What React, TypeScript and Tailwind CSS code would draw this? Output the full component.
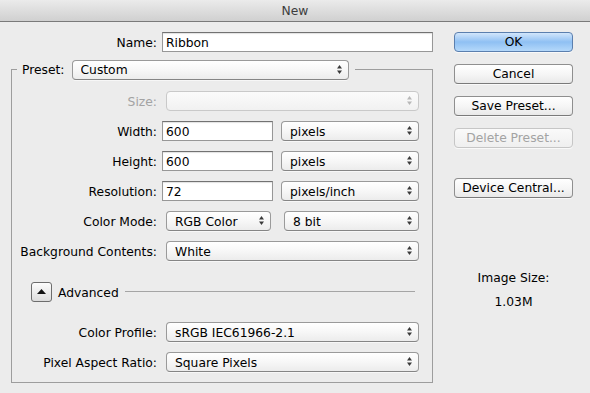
import React from 'react'

const font = { fontFamily: '"DejaVu Sans", "Liberation Sans", sans-serif' }

function Arrows({ disabled }: { disabled?: boolean }) {
  return (
    <svg width="5" height="9" viewBox="0 0 5 9" className="shrink-0">
      <polygon points="2.5,0 5,3.5 0,3.5" fill={disabled ? '#b8b8b8' : '#3a3a3a'} />
      <polygon points="0,5.5 5,5.5 2.5,9" fill={disabled ? '#b8b8b8' : '#3a3a3a'} />
    </svg>
  )
}

function Popup({ value, width, disabled, className = '' }: { value?: string; width: string; disabled?: boolean; className?: string }) {
  return (
    <div
      className={`flex h-[20px] items-center justify-between rounded-[4px] border pl-[8px] pr-[6px] text-[12.3px] ${width} ${className} ${
        disabled
          ? 'border-[#c9c9c9] bg-gradient-to-b from-[#fbfbfb] to-[#f1f1f1] text-[#a0a0a0]'
          : 'border-[#9a9a9a] border-b-[#858585] bg-gradient-to-b from-[#ffffff] via-[#f7f7f7] to-[#ececec] text-black shadow-[0_1px_0_rgba(255,255,255,0.6)]'
      }`}
    >
      <span className="truncate pt-[2px]">{value}</span>
      <Arrows disabled={disabled} />
    </div>
  )
}

function TextInput({ value, width }: { value: string; width: string }) {
  return (
    <div
      className={`flex h-[20px] items-center border border-[#979797] border-t-[#727272] bg-white pt-[2px] pl-[3px] text-[12.3px] text-black shadow-[inset_0_1px_1px_rgba(0,0,0,0.12)] ${width}`}
    >
      {value}
    </div>
  )
}

function Label({ children, disabled }: { children: React.ReactNode; disabled?: boolean }) {
  return (
    <span className={`w-[145px] shrink-0 pt-[2px] text-right text-[12.3px] ${disabled ? 'text-[#a3a3a3]' : 'text-black'}`}>{children}</span>
  )
}

function Button({ children, primary, disabled, className = '' }: { children: React.ReactNode; primary?: boolean; disabled?: boolean; className?: string }) {
  const look = primary
    ? 'border-[#5b7fae] bg-gradient-to-b from-[#d2e6fb] via-[#8fc0f3] to-[#b4d8fa] text-black'
    : disabled
      ? 'border-[#c6c6c6] bg-gradient-to-b from-[#fafafa] to-[#efefef] text-[#a3a3a3]'
      : 'border-[#8f8f8f] border-b-[#7a7a7a] bg-gradient-to-b from-[#ffffff] via-[#f6f6f6] to-[#e9e9e9] text-black'
  return (
    <div className={`flex h-[20px] w-[119px] items-center justify-center rounded-[4px] border pt-[1px] text-[12.3px] shadow-[0_1px_0_rgba(255,255,255,0.7)] ${look} ${className}`}>
      {children}
    </div>
  )
}

export default function App() {
  return (
    <div className="h-[393px] w-[590px] overflow-hidden bg-[#ececec]" style={font}>
      <div className="flex h-[22px] items-center justify-center border-b border-[#7a7a7a] bg-gradient-to-b from-[#ebebeb] to-[#d0d0d0] pt-[1px] text-[12.3px] text-[#3d3d3d]">
        New
      </div>

      <div className="flex pt-[10px] pl-[11px]">
        {/* left column */}
        <div className="w-[422px]">
          <div className="flex items-center">
            <span className="w-[146px] shrink-0 pt-[2px] text-right text-[12.3px] text-black">Name:</span>
            <TextInput value="Ribbon" width="ml-[5px] w-[271px]" />
          </div>

          <fieldset className="mt-[7px] w-[422px] border border-[#9d9d9d] pb-[10px]">
            <legend className="ml-[5px] flex items-center pl-[5px] pr-[6px]">
              <span className="pt-[2px] text-[12.3px] text-black">Preset:</span>
              <Popup value="Custom" width="w-[277px]" className="ml-[7px]" />
            </legend>

            <div className="flex flex-col pt-[11px]">
              <div className="flex h-[20px] items-center">
                <Label disabled>Size:</Label>
                <Popup width="w-[253px]" className="ml-[9px]" disabled />
              </div>

              <div className="mt-[10px] flex h-[20px] items-center">
                <Label>Width:</Label>
                <TextInput value="600" width="ml-[5px] w-[111px]" />
                <Popup value="pixels" width="w-[138px]" className="ml-[8px]" />
              </div>

              <div className="mt-[10px] flex h-[20px] items-center">
                <Label>Height:</Label>
                <TextInput value="600" width="ml-[5px] w-[111px]" />
                <Popup value="pixels" width="w-[138px]" className="ml-[8px]" />
              </div>

              <div className="mt-[10px] flex h-[20px] items-center">
                <Label>Resolution:</Label>
                <TextInput value="72" width="ml-[5px] w-[111px]" />
                <Popup value="pixels/inch" width="w-[138px]" className="ml-[8px]" />
              </div>

              <div className="mt-[10px] flex h-[20px] items-center">
                <Label>Color Mode:</Label>
                <Popup value="RGB Color" width="w-[105px]" className="ml-[9px]" />
                <Popup value="8 bit" width="w-[135px]" className="ml-[13px]" />
              </div>

              <div className="mt-[10px] flex h-[20px] items-center">
                <Label>Background Contents:</Label>
                <Popup value="White" width="w-[253px]" className="ml-[9px]" />
              </div>

              <div className="mt-[21px] flex h-[20px] items-center pl-[19px]">
                <div className="flex h-[20px] w-[21px] items-center justify-center rounded-[3px] border border-[#6d6d6d] bg-gradient-to-b from-[#fdfdfd] to-[#dcdcdc]">
                  <svg width="9" height="5" viewBox="0 0 9 5">
                    <polygon points="4.5,0 9,5 0,5" fill="#111" />
                  </svg>
                </div>
                <span className="ml-[6px] pt-[2px] text-[12.3px] text-black">Advanced</span>
                <div className="ml-[6px] h-px w-[290px] bg-[#a5a5a5]" />
              </div>

              <div className="mt-[20px] flex h-[20px] items-center">
                <Label>Color Profile:</Label>
                <Popup value="sRGB IEC61966-2.1" width="w-[253px]" className="ml-[9px]" />
              </div>

              <div className="mt-[10px] flex h-[20px] items-center">
                <Label>Pixel Aspect Ratio:</Label>
                <Popup value="Square Pixels" width="w-[253px]" className="ml-[9px]" />
              </div>
            </div>
          </fieldset>
        </div>

        {/* right column */}
        <div className="ml-[21px] flex w-[119px] flex-col">
          <Button primary>OK</Button>
          <Button className="mt-[12px]">Cancel</Button>
          <Button className="mt-[12px]">Save Preset...</Button>
          <Button className="mt-[12px]" disabled>Delete Preset...</Button>
          <Button className="mt-[30px]">Device Central...</Button>
          <div className="mt-[72px] text-center text-[12.3px] leading-[16px] text-black">Image Size:</div>
          <div className="mt-[8px] text-center text-[12.3px] leading-[16px] text-black">1.03M</div>
        </div>
      </div>
    </div>
  )
}
